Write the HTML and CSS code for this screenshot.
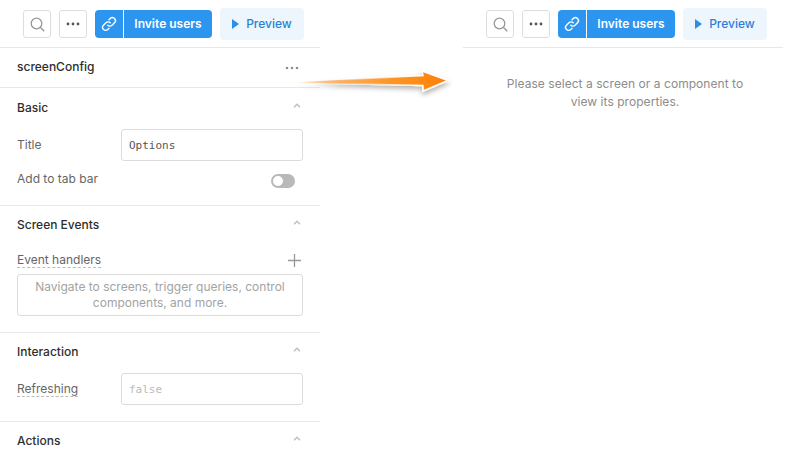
FILE: index.html
```html
<!DOCTYPE html>
<html lang="en">
<head>
    <meta charset="UTF-8">
    <meta name="viewport" content="width=device-width, initial-scale=1.0">
    <title>Screen config</title>
    <link rel="stylesheet" href="styles.css">
</head>
<body>
    <div class="page">
        <!-- Left panel -->
        <div class="panel">
            <div class="toolbar">
                <button class="icon-btn"><svg width="15" height="15" viewBox="0 0 15 15" fill="none" stroke="#969696" stroke-width="1.3"><circle cx="6.500" cy="6.500" r="5.300"/><path d="M10.500 10.500L14.300 14.300"/></svg></button>
                <button class="icon-btn"><svg width="14" height="4" viewBox="0 0 14 4" fill="#555"><circle cx="2" cy="2" r="1.4"/><circle cx="7" cy="2" r="1.4"/><circle cx="12" cy="2" r="1.4"/></svg></button>
                <button class="invite">
                    <span class="invite-icon"><svg width="16" height="16" viewBox="0 0 16 16" fill="none" stroke="#fff" stroke-width="1.4" stroke-linecap="round"><path d="M6.8 9.2a3 3 0 0 0 4.3 0l2.4-2.4a3 3 0 0 0-4.3-4.3L8 3.7"/><path d="M9.2 6.8a3 3 0 0 0-4.3 0L2.500 9.200a3 3 0 0 0 4.300 4.300L8 12.300"/></svg></span>
                    <span class="invite-text">Invite users</span>
                </button>
                <button class="preview"><svg width="7" height="10" viewBox="0 0 7 10" fill="#2b8fe6"><path d="M0 0L7 5L0 10Z"/></svg><span>Preview</span></button>
            </div>

            <div class="config-row">
                <span class="config-name">screenConfig</span>
                <svg width="14" height="4" viewBox="0 0 14 4" fill="#8f8f8f"><circle cx="2" cy="2" r="1.3"/><circle cx="7" cy="2" r="1.3"/><circle cx="12" cy="2" r="1.3"/></svg>
            </div>

            <div class="section section-basic">
                <div class="section-head">
                    <h3>Basic</h3>
                    <svg class="chevron" width="8" height="5" viewBox="0 0 8 5" fill="none" stroke="#bdbdbd" stroke-width="1.4"><path d="M1 4.200L4 1.200L7 4.200"/></svg>
                </div>
                <div class="field">
                    <label>Title</label>
                    <div class="input">Options</div>
                </div>
                <div class="field field-toggle">
                    <label>Add to tab bar</label>
                    <span class="toggle"></span>
                </div>
            </div>

            <div class="section section-events">
                <div class="section-head">
                    <h3>Screen Events</h3>
                    <svg class="chevron" width="8" height="5" viewBox="0 0 8 5" fill="none" stroke="#bdbdbd" stroke-width="1.4"><path d="M1 4.200L4 1.200L7 4.200"/></svg>
                </div>
                <div class="handlers-head">
                    <label class="dashed">Event handlers</label>
                    <svg width="13" height="13" viewBox="0 0 13 13" stroke="#999" stroke-width="1.3"><path d="M6.500 0V13M0 6.500H13"/></svg>
                </div>
                <div class="handlers-box">Navigate to screens, trigger queries, control components, and more.</div>
            </div>

            <div class="section section-interaction">
                <div class="section-head">
                    <h3>Interaction</h3>
                    <svg class="chevron" width="8" height="5" viewBox="0 0 8 5" fill="none" stroke="#bdbdbd" stroke-width="1.4"><path d="M1 4.200L4 1.200L7 4.200"/></svg>
                </div>
                <div class="field">
                    <label class="dashed">Refreshing</label>
                    <div class="input input-empty">false</div>
                </div>
            </div>

            <div class="section section-actions">
                <div class="section-head">
                    <h3>Actions</h3>
                    <svg class="chevron" width="8" height="5" viewBox="0 0 8 5" fill="none" stroke="#bdbdbd" stroke-width="1.4"><path d="M1 4.200L4 1.200L7 4.200"/></svg>
                </div>
            </div>
        </div>

        <!-- Right panel -->
        <div class="panel panel-right">
            <div class="toolbar">
                <button class="icon-btn"><svg width="15" height="15" viewBox="0 0 15 15" fill="none" stroke="#969696" stroke-width="1.3"><circle cx="6.500" cy="6.500" r="5.300"/><path d="M10.500 10.500L14.300 14.300"/></svg></button>
                <button class="icon-btn"><svg width="14" height="4" viewBox="0 0 14 4" fill="#555"><circle cx="2" cy="2" r="1.4"/><circle cx="7" cy="2" r="1.4"/><circle cx="12" cy="2" r="1.4"/></svg></button>
                <button class="invite">
                    <span class="invite-icon"><svg width="16" height="16" viewBox="0 0 16 16" fill="none" stroke="#fff" stroke-width="1.4" stroke-linecap="round"><path d="M6.8 9.2a3 3 0 0 0 4.3 0l2.4-2.4a3 3 0 0 0-4.3-4.3L8 3.7"/><path d="M9.2 6.8a3 3 0 0 0-4.3 0L2.500 9.200a3 3 0 0 0 4.300 4.300L8 12.300"/></svg></span>
                    <span class="invite-text">Invite users</span>
                </button>
                <button class="preview"><svg width="7" height="10" viewBox="0 0 7 10" fill="#2b8fe6"><path d="M0 0L7 5L0 10Z"/></svg><span>Preview</span></button>
            </div>
            <p class="empty">Please select a screen or a component to view its properties.</p>
        </div>

        <!-- Arrow on top of the panels -->
        <svg class="arrow" width="170" height="40" viewBox="0 0 170 40">
            <defs>
                <linearGradient id="arrow-fill" gradientUnits="userSpaceOnUse" x1="4" y1="0" x2="160" y2="0">
                    <stop offset="0" stop-color="#ff9a2e" stop-opacity="0"/>
                    <stop offset="0.3" stop-color="#fbb063"/>
                    <stop offset="0.65" stop-color="#fd9524"/>
                    <stop offset="1" stop-color="#ff7f05"/>
                </linearGradient>
                <linearGradient id="arrow-edge" gradientUnits="userSpaceOnUse" x1="40" y1="0" x2="130" y2="0">
                    <stop offset="0" stop-color="#fff" stop-opacity="0"/>
                    <stop offset="1" stop-color="#fff"/>
                </linearGradient>
                <filter id="arrow-shadow" x="-10%" y="-40%" width="120%" height="200%">
                    <feDropShadow dx="0" dy="3" stdDeviation="2.500" flood-color="#000" flood-opacity="0.3"/>
                </filter>
            </defs>
            <path d="M4 20.500L135 13.500L134 9L160 18.500L135 29L135 23.500Z" fill="url(#arrow-fill)" stroke="url(#arrow-edge)" stroke-width="1.500" filter="url(#arrow-shadow)"/>
        </svg>
    </div>
</body>
</html>
```

FILE: styles.css
```css
body {
    font-family: Inter, "Liberation Sans", sans-serif;
    margin: 0;
    background: #fff;
    overflow: hidden;
}

.page {
    position: relative;
    display: grid;
    grid-template-columns: 320px 320px;
    justify-content: space-between;
    width: 783px;
    height: 454px;
    overflow: hidden;
}

.panel {
    min-width: 0;
}

.toolbar {
    display: flex;
    align-items: center;
    justify-content: flex-end;
    gap: 8px;
    height: 48px;
    padding: 1px 16px 0 0;
    box-sizing: border-box;
    border-bottom: 1px solid #e8e8e8;
}

button {
    font-family: inherit;
    border: none;
    padding: 0;
    cursor: pointer;
}

.icon-btn {
    display: flex;
    align-items: center;
    justify-content: center;
    width: 28px;
    height: 28px;
    background: #fff;
    border: 1px solid #dedede;
    border-radius: 3px;
}

.invite {
    display: flex;
    align-items: stretch;
    width: 117px;
    height: 28px;
    background: #2b95f0;
    color: #fff;
    border-radius: 4px;
    font-size: 12px;
    font-weight: 600;
}

.invite-icon {
    display: flex;
    align-items: center;
    justify-content: center;
    width: 28px;
    border-right: 1px solid #fff;
}

.invite-text {
    flex: 1;
    align-self: center;
    text-align: center;
    padding-bottom: 2px;
}

.preview {
    display: flex;
    align-items: center;
    justify-content: center;
    gap: 7px;
    width: 84px;
    height: 32px;
    background: #edf6fd;
    color: #2b80d6;
    border-radius: 4px;
    font-size: 12px;
    font-weight: 500;
}

.preview span {
    padding-bottom: 2px;
}

.config-row {
    display: flex;
    align-items: center;
    justify-content: space-between;
    height: 39px;
    padding: 0 21px 0 17px;
    border-bottom: 1px solid #e8e8e8;
}

.config-name {
    font-size: 12px;
    font-weight: 500;
    color: #2e2e2e;
    padding-bottom: 2px;
}

.section {
    border-bottom: 1px solid #e8e8e8;
    padding: 0 17px;
}

.section-basic {
    height: 117px;
}

.section-events {
    height: 126px;
}

.section-interaction {
    height: 88px;
}

.section-actions {
    border-bottom: none;
}

.section-head {
    display: flex;
    align-items: center;
    justify-content: space-between;
    height: 36px;
    padding-right: 2px;
}

.section-basic .section-head {
    height: 38px;
}

.section-head h3 {
    margin: 0;
    font-size: 12px;
    font-weight: 500;
    color: #2e2e2e;
}

.chevron {
    margin-bottom: 3px;
}

.field {
    display: grid;
    grid-template-columns: 104px 182px;
    align-items: center;
    margin-top: 3px;
}

.section-interaction .field {
    margin-top: 4px;
}

label {
    font-size: 12px;
    color: #666;
    padding-bottom: 2px;
}

.input {
    height: 32px;
    box-sizing: border-box;
    border: 1px solid #dcdcdc;
    border-radius: 3px;
    padding: 0 7px;
    line-height: 31px;
    font-family: "DejaVu Sans Mono", "Liberation Mono", monospace;
    font-size: 11px;
    color: #555;
}

.input-empty {
    color: #bbb;
}

.field-toggle {
    display: flex;
    justify-content: space-between;
    margin-top: 10px;
    padding-right: 8px;
}

.field-toggle label {
    padding-bottom: 4px;
}

.toggle {
    position: relative;
    width: 24px;
    height: 14px;
    background: #b9b9b9;
    border-radius: 7px;
}

.toggle::after {
    content: "";
    position: absolute;
    left: 2px;
    top: 2px;
    width: 10px;
    height: 10px;
    background: #fff;
    border-radius: 50%;
}

.handlers-head {
    display: flex;
    align-items: center;
    justify-content: space-between;
    margin-top: 8px;
    height: 20px;
    padding-right: 2px;
}

.dashed {
    justify-self: start;
    border-bottom: 1px dashed #bbb;
    line-height: 15px;
    padding-bottom: 0;
}

.handlers-box {
    margin-top: 4px;
    height: 42px;
    box-sizing: border-box;
    border: 1px solid #dcdcdc;
    border-radius: 3px;
    padding: 4px 12px;
    text-align: center;
    font-size: 12px;
    line-height: 16px;
    color: #a3a3a3;
}

.empty {
    margin: 27px 0 0;
    padding: 0 38px 0 42px;
    text-align: center;
    font-size: 12px;
    line-height: 18px;
    letter-spacing: 0.05px;
    color: #8c8c8c;
}

.arrow {
    position: absolute;
    left: 288px;
    top: 62px;
}
```
